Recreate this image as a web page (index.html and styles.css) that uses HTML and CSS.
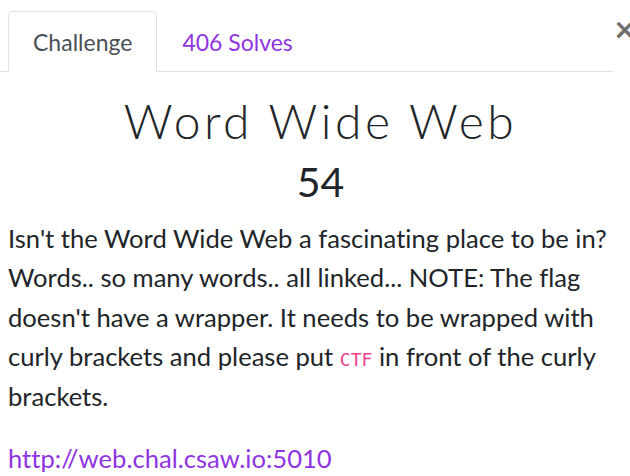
FILE: index.html
```html
<!DOCTYPE html>
<html>
<head>
<meta charset="utf-8">
<link rel="stylesheet" href="styles.css">
</head>
<body>
<div class="modal">
  <button class="close" aria-label="Close">×</button>
  <ul class="tabs">
    <li class="tab active">Challenge</li>
    <li class="tab link">406 Solves</li>
  </ul>
  <div class="content">
    <h2 class="title">Word Wide Web</h2>
    <h3 class="value">54</h3>
    <p class="desc">Isn't the Word Wide Web a fascinating place to be in? Words.. so many words.. all linked... NOTE: The flag doesn't have a wrapper. It needs to be wrapped with curly brackets and please put <code>CTF</code> in front of the curly brackets.</p>
    <p class="desc"><a class="url" href="#">http://web.chal.csaw.io:5010</a></p>
  </div>
</div>
</body>
</html>
```

FILE: styles.css
```css
html, body {
  margin: 0;
  padding: 0;
  background: #fff;
  overflow: hidden;
}
body {
  font-family: "Lato", "Liberation Sans", sans-serif;
  color: #212529;
  font-variant-ligatures: none;
}
.modal {
  position: relative;
  width: 641px;
}
.close {
  position: absolute;
  left: 613px;
  top: 16px;
  border: 0;
  background: none;
  padding: 0;
  font-family: "DejaVu Sans", sans-serif;
  font-size: 28px;
  line-height: 28px;
  color: #6f6f6f;
  font-weight: 700;
}
.tabs {
  list-style: none;
  margin: 0;
  padding: 11px 0 0 8px;
  width: 605px;
  display: flex;
  border-bottom: 1px solid #dee2e6;
}
.tab {
  font-size: 23px;
  line-height: 28px;
  padding: 16px 24px 15px 24px;
  margin-bottom: -1px;
  border: 1px solid transparent;
  border-top-left-radius: 5px;
  border-top-right-radius: 5px;
}
.tab.active {
  color: #495057;
  border-color: #dee2e6 #dee2e6 #fff;
  background: #fff;
}
.tab.link {
  color: #8e34e0;
}
.content {
  padding: 0 8px;
}
.title {
  margin: 20px 0 0;
  text-align: center;
  font-weight: 300;
  font-size: 48px;
  line-height: 58px;
  letter-spacing: 3.5px;
}
.value {
  margin: 0;
  text-align: center;
  font-weight: 400;
  font-size: 41px;
  line-height: 64px;
}
.desc {
  margin: 5px 0 0;
  font-size: 25.6px;
  line-height: 39.4px;
  width: 615px;
}
.desc + .desc {
  margin-top: 23px;
}
code {
  font-family: "DejaVu Sans Mono", monospace;
  color: #e83e8c;
  font-size: 18px;
  line-height: 0;
}
.url {
  color: #8e34e0;
  text-decoration: none;
}
```
